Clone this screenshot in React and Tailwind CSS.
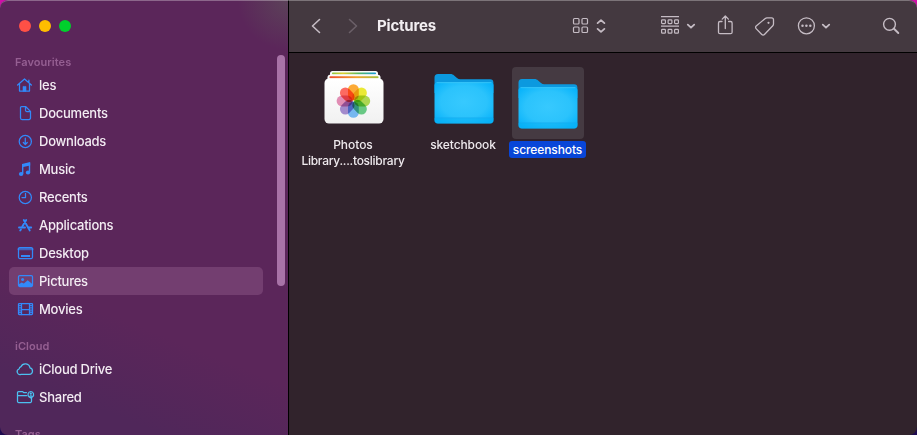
import React from "react";

function Glyph({ children, color = "#3289fa" }) {
  return (
    <svg width="20" height="20" viewBox="0 0 20 20" className="shrink-0" fill="none" stroke={color} strokeWidth="1.25" strokeLinecap="round" strokeLinejoin="round">
      {children}
    </svg>
  );
}

const icons = {
  home: (
    <Glyph>
      <path d="M2.6 10 9.5 4l6.9 6M4.5 8.8v7.2h10V8.8M13.9 7.4V5" />
      <path d="M8 16v-4.6h3V16z" fill="#3289fa" strokeWidth="0.6" />
    </Glyph>
  ),
  doc: (
    <Glyph>
      <path d="M6.5 3.5h4.1l4.9 4.9v6.6a1.5 1.5 0 0 1-1.5 1.5H7A1.5 1.5 0 0 1 5.5 15V4.5a1 1 0 0 1 1-1zM10.5 3.7v3.6a1.2 1.2 0 0 0 1.2 1.2h3.7" />
    </Glyph>
  ),
  download: (
    <Glyph>
      <circle cx="10.3" cy="10.5" r="6.1" />
      <path d="M10.3 7.2v6.2M8.3 11.5l2 2 2-2" />
    </Glyph>
  ),
  music: (
    <Glyph>
      <path d="M7.7 14.6V6.1l6.8-1.6v8.6" strokeWidth="1.4" />
      <path d="M7 4.9 15.2 3.1v3.4L7 8.3z" fill="#3289fa" stroke="none" />
      <ellipse cx="6.1" cy="15" rx="2.2" ry="1.9" fill="#3289fa" stroke="none" />
      <ellipse cx="13" cy="13.5" rx="2.2" ry="1.9" fill="#3289fa" stroke="none" />
    </Glyph>
  ),
  clock: (
    <Glyph>
      <circle cx="10.3" cy="10.5" r="6.1" />
      <path d="M10.5 6.4v4.1H7" />
    </Glyph>
  ),
  apps: (
    <Glyph>
      <path d="m8.8 5 5.9 10.4M11.2 5 7.3 11.5M5.9 14.4l-.7 1.1" strokeWidth="1.9" />
      <path d="M4 12.5h6M13.4 12.5h2.8" strokeWidth="1.9" />
    </Glyph>
  ),
  desktop: (
    <Glyph>
      <rect x="3.5" y="4.5" width="14" height="11" rx="1.2" />
      <path d="M3.5 6.2h14" strokeWidth="2.2" opacity=".6" />
      <path d="M6 13h9" strokeWidth="2" strokeLinecap="butt" />
    </Glyph>
  ),
  picture: (
    <Glyph>
      <rect x="3.5" y="4.5" width="14" height="11" rx="1.2" />
      <circle cx="7.6" cy="8.5" r="1.5" fill="#3289fa" stroke="none" />
      <path d="M3.8 13.2 6.7 11.6l2.2.9 3.8-3.2 4.6 3.7v2.3H3.8z" fill="#3289fa" stroke="none" />
    </Glyph>
  ),
  movie: (
    <Glyph>
      <rect x="3.5" y="4.5" width="14" height="11" rx=".8" />
      <path d="M6.5 4.5v11M14.5 4.5v11M6.5 10.5h8" />
      <path d="M5 6v9M16 6v9" strokeWidth="1.8" strokeDasharray="1.3 .9" strokeLinecap="butt" />
    </Glyph>
  ),
  cloud: (
    <Glyph color="#4cc0f0">
      <path d="M6 15.4h8.3a3.3 3.3 0 0 0 .7-6.5 4.7 4.7 0 0 0-9-1.2 2.8 2.8 0 0 0-1.9 2.3A2.8 2.8 0 0 0 6 15.4z" />
    </Glyph>
  ),
  shared: (
    <Glyph color="#4cc0f0">
      <path d="M11.5 5.5H8.6L7.6 4.6H3.5a1 1 0 0 0-1 1v8.7a1.2 1.2 0 0 0 1.2 1.2h11.6a1.2 1.2 0 0 0 1.2-1.2v-3.3M2.6 8.5h9" />
      <path d="M15.8 4.5a3 3 0 0 1 1.6 5.4l-1.6 1-1.6-1a3 3 0 0 1 1.6-5.4z" />
      <circle cx="15.8" cy="6.7" r="1.1" fill="#4cc0f0" stroke="none" />
      <path d="M14 9.8c.4-2 3.2-2 3.6 0z" fill="#4cc0f0" stroke="none" />
    </Glyph>
  ),
};

const favourites = [
  ["les", "home"],
  ["Documents", "doc"],
  ["Downloads", "download"],
  ["Music", "music"],
  ["Recents", "clock"],
  ["Applications", "apps"],
  ["Desktop", "desktop"],
  ["Pictures", "picture"],
  ["Movies", "movie"],
];

function Row({ label, icon, active }) {
  return (
    <li className={`flex h-7 items-center rounded-[5px] pl-1.5 ${active ? "bg-[#733e70]" : ""}`}>
      {icons[icon]}
      <span className="ml-1 text-[13px] font-medium leading-4 tracking-[-0.24px] text-[#f3ecf3]">{label}</span>
    </li>
  );
}

function Heading({ children }) {
  return <h2 className="pl-1.5 text-[11px] font-semibold leading-[18px] tracking-[0.05px] text-[#955f92]">{children}</h2>;
}

function Sidebar() {
  return (
    <aside className="flex w-[289px] shrink-0 justify-between overflow-hidden border-r border-black bg-[radial-gradient(circle_at_100%_0,#5c4259_0,#5b265a00_50px),linear-gradient(202deg,#5b265a_70%,#50275a_88%,#50275a)] pl-[9px] pr-[3px]">
      <div className="w-[254px] shrink-0">
        <div className="flex gap-2 pl-2.5 pt-5">
          <span className="size-3 rounded-full bg-[#ff5046]" />
          <span className="size-3 rounded-full bg-[#ffbd00]" />
          <span className="size-3 rounded-full bg-[#00d02c]" />
        </div>
        <div className="mt-[21px]">
          <Heading>Favourites</Heading>
        </div>
        <ul>
          {favourites.map(([label, icon]) => (
            <Row key={label} label={label} icon={icon} active={label === "Pictures"} />
          ))}
        </ul>
        <div className="mt-3.5">
          <Heading>iCloud</Heading>
        </div>
        <ul>
          <Row label="iCloud Drive" icon="cloud" />
          <Row label="Shared" icon="shared" />
        </ul>
        <div className="mt-3.5">
          <Heading>Tags</Heading>
        </div>
      </div>
      <div className="mt-[55px] h-[231px] w-2 rounded-full bg-[#a873a7]" />
    </aside>
  );
}

function Toolbar() {
  return (
    <header className="flex h-[53px] shrink-0 items-center border-b border-black bg-[#443940] text-[#c5bcc4]">
      <svg width="80" height="52" viewBox="289 0 80 52" className="shrink-0" fill="none" strokeWidth="1.6" strokeLinecap="round" strokeLinejoin="round">
        <path d="m319.5 19.5-7 6.5 7 6.5" stroke="currentColor" />
        <path d="m349.5 19.5 7 6.5-7 6.5" stroke="#6b6068" />
      </svg>
      <h1 className="ml-2 w-[190px] shrink-0 text-[15px] font-bold leading-5 tracking-[-0.2px] text-[#f2eef1]">Pictures</h1>
      <svg width="350" height="52" viewBox="567 0 350 52" className="shrink-0" fill="none" stroke="currentColor" strokeWidth="1.2" strokeLinecap="round" strokeLinejoin="round">
        <rect x="573.5" y="18.5" width="5.5" height="5.5" rx="1" />
        <rect x="582" y="18.5" width="5.5" height="5.5" rx="1" />
        <rect x="573.5" y="27" width="5.5" height="5.5" rx="1" />
        <rect x="582" y="27" width="5.5" height="5.5" rx="1" />
        <path d="m597.6 23.1 3.4-3 3.4 3M597.6 28.9l3.4 3 3.4-3" strokeWidth="1.8" />
        <path d="M661 16.7h18M661 26.2h18" strokeLinecap="butt" />
        <rect x="661.6" y="19.8" width="3.8" height="3.8" rx=".8" />
        <rect x="668.1" y="19.8" width="3.8" height="3.8" rx=".8" />
        <rect x="674.6" y="19.8" width="3.8" height="3.8" rx=".8" />
        <rect x="661.6" y="29.4" width="3.8" height="3.8" rx=".8" />
        <rect x="668.1" y="29.4" width="3.8" height="3.8" rx=".8" />
        <rect x="674.6" y="29.4" width="3.8" height="3.8" rx=".8" />
        <path d="m687.8 24.7 3.2 3 3.2-3" strokeWidth="1.8" />
        <path d="M722 21.5h-2a1.5 1.5 0 0 0-1.5 1.5v9.2a1.5 1.5 0 0 0 1.5 1.5h10.6a1.5 1.5 0 0 0 1.5-1.5V23a1.5 1.5 0 0 0-1.5-1.5h-2M725.3 28.5V16.2M722.2 19.1l3.1-3.1 3.1 3.1" strokeWidth="1.3" />
        <path d="M767 17.8h4.5a2 2 0 0 1 2 2v4.3a2.2 2.2 0 0 1-.7 1.6l-8.4 8.8a1.8 1.8 0 0 1-2.6 0l-5.7-5.9a1.8 1.8 0 0 1 .1-2.6l9.1-7.6a2.5 2.5 0 0 1 1.7-.6z" strokeWidth="1.3" />
        <circle cx="768.5" cy="22.8" r="1.1" fill="currentColor" stroke="none" />
        <circle cx="806.4" cy="25.8" r="8" strokeWidth="1.3" />
        <g fill="currentColor" stroke="none">
          <circle cx="802.5" cy="25.8" r="1.25" />
          <circle cx="806.4" cy="25.8" r="1.25" />
          <circle cx="810.3" cy="25.8" r="1.25" />
        </g>
        <path d="m822.8 24.7 3.2 3 3.2-3" strokeWidth="1.8" />
        <circle cx="889.5" cy="24.3" r="5.9" strokeWidth="1.4" />
        <path d="m894 28.8 4.3 4.2" strokeWidth="1.9" />
      </svg>
    </header>
  );
}

const petals = [
  ["#fb9b13", 0],
  ["#e6e510", 45],
  ["#a0d035", 90],
  ["#4fbf70", 135],
  ["#5fabee", 180],
  ["#9377c4", 225],
  ["#dd7aa8", 270],
  ["#fb5045", 315],
];

function PhotosIcon() {
  return (
    <svg width="62" height="56" viewBox="0 0 62 56">
      <defs>
        <linearGradient id="back"><stop stopColor="#8cc63f" /><stop offset=".25" stopColor="#e0d02b" /><stop offset=".6" stopColor="#58b85c" /><stop offset="1" stopColor="#159cd8" /></linearGradient>
        <linearGradient id="front"><stop stopColor="#ee4b2b" /><stop offset=".55" stopColor="#f3a02c" /><stop offset="1" stopColor="#a3c33b" /></linearGradient>
        <linearGradient id="card" x2="0" y2="1"><stop stopColor="#fff" /><stop offset="1" stopColor="#f1f1f1" /></linearGradient>
      </defs>
      <rect x="7" y="1" width="48" height="12" rx="2.5" fill="#f8f8f8" />
      <rect x="9" y="2.5" width="44" height="1.8" rx=".8" fill="url(#back)" />
      <rect x="4.5" y="4.8" width="53" height="12" rx="2.5" fill="#fafafa" />
      <rect x="6.5" y="6.3" width="49" height="2" rx=".8" fill="url(#front)" />
      <rect x="1.5" y="8.5" width="59" height="45" rx="4.5" fill="url(#card)" />
      <g className="isolate" transform="translate(-.6 0)">
        {petals.map(([color, angle]) => (
          <rect key={angle} x="25.6" y="14.2" width="10.8" height="16.2" rx="5.4" fill={color} fillOpacity=".85" transform={`rotate(${angle} 31 31)`} className="mix-blend-multiply" />
        ))}
      </g>
    </svg>
  );
}

function FolderIcon() {
  return (
    <svg width="60" height="52" viewBox="0 0 60 52">
      <defs>
        <radialGradient id="folderFace" cx=".5" cy=".48" r=".65"><stop stopColor="#37c9fe" /><stop offset=".6" stopColor="#2bc3fc" /><stop offset="1" stopColor="#06b2fa" /></radialGradient>
      </defs>
      <path d="M.5 4.5a3.5 3.5 0 0 1 3.5-3.5h12.5c1.5 0 2.5.5 3.6 1.5L23 5c1 .8 2 1.2 3.3 1.2H56a3.4 3.4 0 0 1 3.4 3.4V20H.5z" fill="#0b99df" />
      <rect x=".5" y="9.2" width="59" height="41.3" rx="3.4" fill="url(#folderFace)" />
      <path d="M2.5 9.7h55" stroke="#48cdfb" strokeWidth=".7" />
      <path d="M.5 45h59v2.1a3.4 3.4 0 0 1-3.4 3.4H3.9a3.4 3.4 0 0 1-3.4-3.4z" fill="#08b0f4" opacity=".5" />
      <path d="M1 44.8h58" stroke="#14a8ec" strokeWidth=".6" />
    </svg>
  );
}

function Files() {
  return (
    <section className="flex grow items-start bg-[#31232c] text-center text-[12px] font-medium leading-4 text-[#eee9ed]">
      <figure className="ml-[9px] flex w-[110px] flex-col items-center pt-[17px]">
        <div className="pl-[2px]">
          <PhotosIcon />
        </div>
        <figcaption className="mt-[11px] whitespace-nowrap tracking-[-0.05px]">
          Photos
          <br />
          <span className="tracking-[-0.26px]">Library....toslibrary</span>
        </figcaption>
      </figure>
      <figure className="flex w-[110px] flex-col items-center pt-[20px]">
        <div className="pl-[2px]">
          <FolderIcon />
        </div>
        <figcaption className="mt-3 tracking-[-0.1px]">sketchbook</figcaption>
      </figure>
      <figure className="ml-[-10px] flex w-[79px] flex-col items-center pt-[14px]">
        <div className="flex h-[72px] w-[72px] justify-center rounded-[4px] bg-[#453a42] pt-[11px]">
          <FolderIcon />
        </div>
        <figcaption className="mt-[2px] flex h-[17px] w-[77px] items-center justify-center rounded-[3px] bg-[#0846d8] tracking-[-0.1px] text-white">screenshots</figcaption>
      </figure>
    </section>
  );
}

export default function App() {
  return (
    <div className="h-[435px] w-[917px] bg-[linear-gradient(180deg,#d010a8,#d010a8_5%,#1e0a50_60%,#1e0a50)] font-['Inter','Liberation_Sans',sans-serif]">
      <main className="relative flex h-full overflow-hidden rounded-[8px]">
        <Sidebar />
        <div className="flex min-w-0 grow flex-col">
          <Toolbar />
          <Files />
        </div>
        <div className="pointer-events-none absolute inset-0 rounded-[8px] border-t border-white/30" />
      </main>
    </div>
  );
}
